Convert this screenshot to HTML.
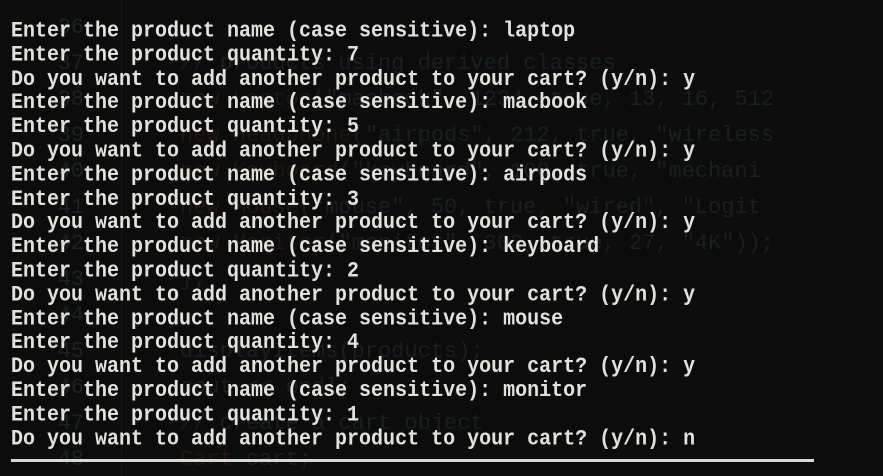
<!DOCTYPE html>
<html><head><style>
html,body{margin:0;padding:0;background:#0c0c0c;width:883px;height:476px;overflow:hidden;position:relative}
.bg{position:absolute;left:0;top:0;font-family:"Liberation Mono",monospace;font-size:22px;white-space:pre;line-height:36px;}
.ln{position:absolute;left:48px;top:10px;color:#1a2323;text-align:right;width:36px}
.code{position:absolute;left:180px;top:10px;color:#172020}
.code .r{color:#241510}
.gut{position:absolute;left:121px;top:0;width:1px;height:476px;background:#151818}
.t{position:absolute;left:11px;top:20px;font-family:"Liberation Mono",monospace;font-weight:bold;font-size:20px;line-height:21.8px;color:#e2e2da;white-space:pre;transform:scaleY(1.1);transform-origin:0 0}
.hr{position:absolute;left:11px;top:459px;width:803px;height:3px;background:#d8d8d0}
</style></head><body>
<div class="gut"></div>
<div class="bg"><div class="ln">36
37
38
39
40
41
42
43
44
45
46
47
48</div><div class="code">
// products using derived classes
<span class="r">new Laptop</span>("macbook", 1234, true, 13, 16, 512
<span class="r">new Headphone</span>("airpods", 212, true, "wireless
<span class="r">new Keyboard</span>("keyboard", 100, true, "mechani
<span class="r">new Mouse</span>("mouse", 50, true, "wired", "Logit
<span class="r">new Monitor</span>("monitor", 300, true, 27, "4K"));
};

displayItems(products);
cout &lt;&lt; endl;
// create a cart object
<span class="r">Cart</span> cart;</div></div>
<div class="t">Enter the product name (case sensitive): laptop
Enter the product quantity: 7
Do you want to add another product to your cart? (y/n): y
Enter the product name (case sensitive): macbook
Enter the product quantity: 5
Do you want to add another product to your cart? (y/n): y
Enter the product name (case sensitive): airpods
Enter the product quantity: 3
Do you want to add another product to your cart? (y/n): y
Enter the product name (case sensitive): keyboard
Enter the product quantity: 2
Do you want to add another product to your cart? (y/n): y
Enter the product name (case sensitive): mouse
Enter the product quantity: 4
Do you want to add another product to your cart? (y/n): y
Enter the product name (case sensitive): monitor
Enter the product quantity: 1
Do you want to add another product to your cart? (y/n): n</div>
<div class="hr"></div>
</body></html>
